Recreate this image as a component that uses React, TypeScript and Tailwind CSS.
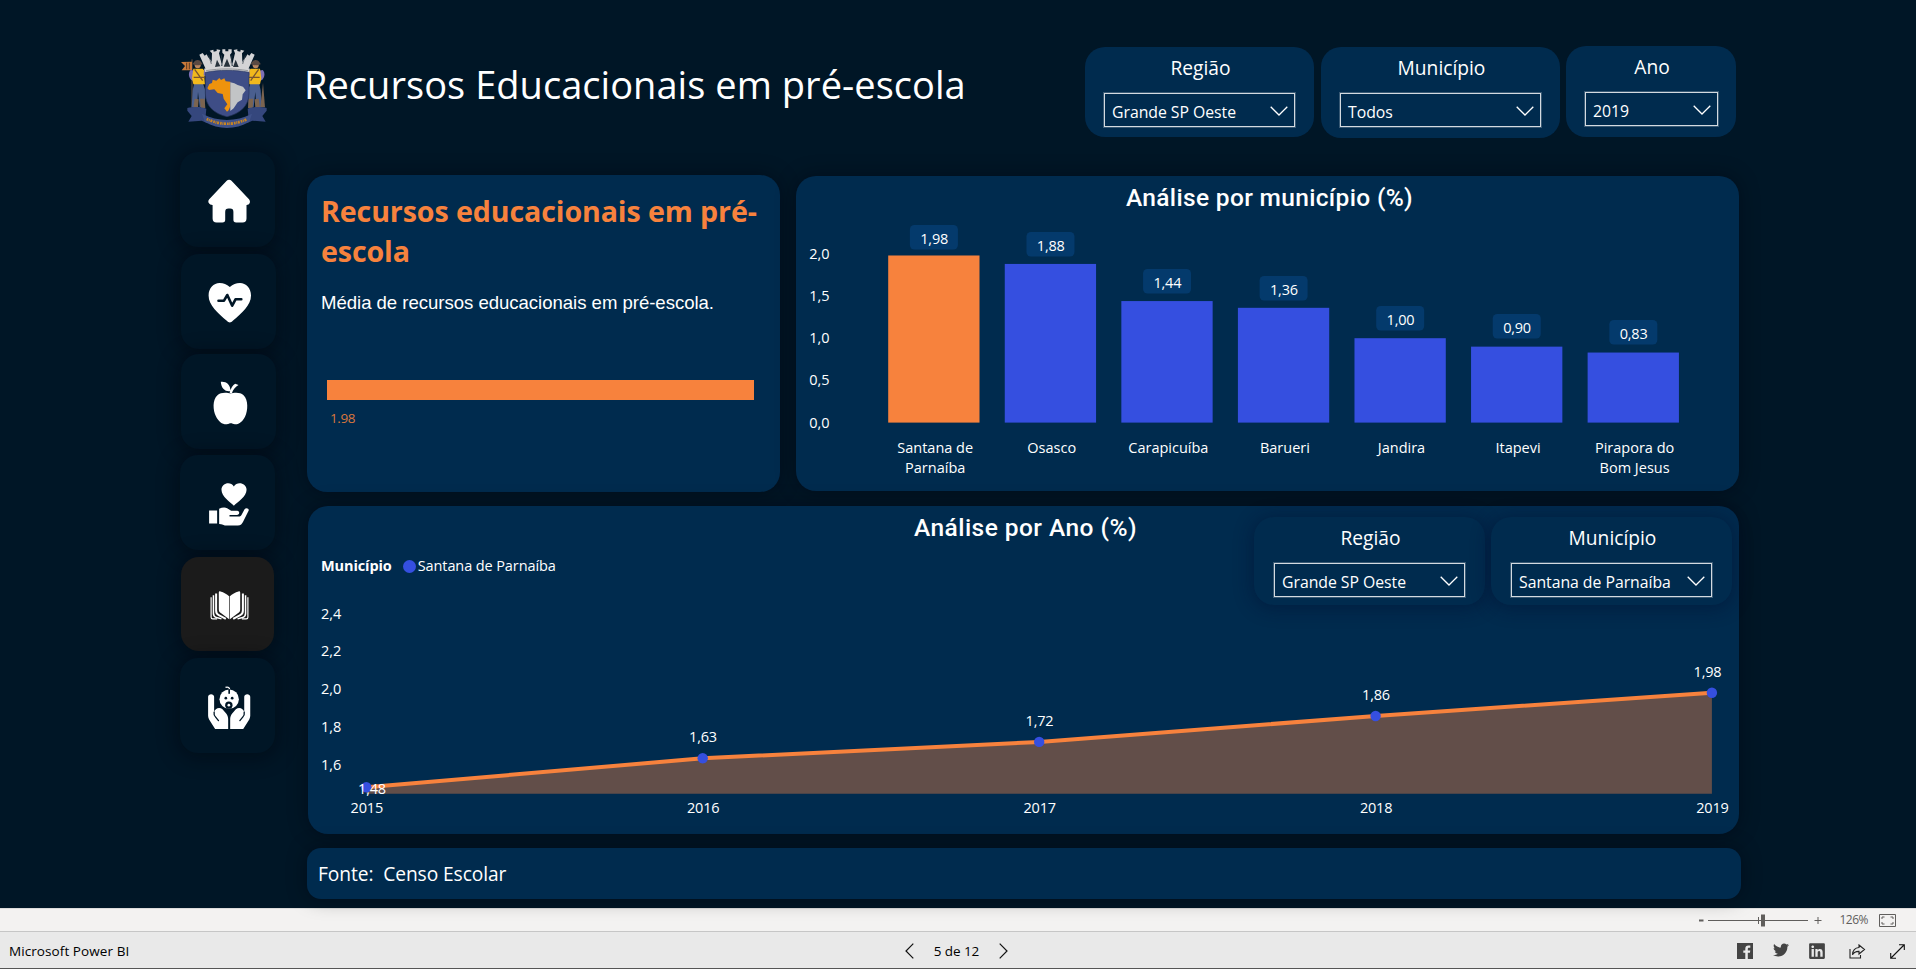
import type { ReactNode } from 'react';
import { FaLinkedin, FaTwitter } from 'react-icons/fa';

const cities = [
  { name: ['Santana de', 'Parnaíba'], value: 1.98, labelY: 225 },
  { name: ['Osasco'], value: 1.88, labelY: 232 },
  { name: ['Carapicuíba'], value: 1.44, labelY: 269 },
  { name: ['Barueri'], value: 1.36, labelY: 276 },
  { name: ['Jandira'], value: 1.0, labelY: 306 },
  { name: ['Itapevi'], value: 0.9, labelY: 314 },
  { name: ['Pirapora do', 'Bom Jesus'], value: 0.83, labelY: 320 },
];

const years = [
  { year: 2015, value: 1.48, x: 366.3, y: 787.3, lx: 372, ly: 794 },
  { year: 2016, value: 1.63, x: 702.7, y: 758.3, lx: 703, ly: 742 },
  { year: 2017, value: 1.72, x: 1039.2, y: 741.9, lx: 1039.5, ly: 726 },
  { year: 2018, value: 1.86, x: 1375.6, y: 716, lx: 1376, ly: 700 },
  { year: 2019, value: 1.98, x: 1711.9, y: 692.7, lx: 1707.5, ly: 677 },
];

const comma = (n: number, digits: number) => n.toFixed(digits).replace('.', ',');

function Chevron() {
  return (
    <svg width="18" height="10" viewBox="0 0 18 10" className="mb-[3px] shrink-0" fill="none" stroke="#fff" strokeWidth="1.3">
      <path d="M.7.8 9 9 17.3.8" />
    </svg>
  );
}

function Filter({ label, value, className, selectClass }: { label: string; value: string; className: string; selectClass: string }) {
  return (
    <div className={`flex shrink-0 flex-col rounded-[20px] bg-[#002b4e] pt-[9px] ${className}`}>
      <div className="pl-[2px] text-center text-[19.2px] leading-6">{label}</div>
      <div
        className={`mt-[13px] flex h-[34px] items-center justify-between border border-[#d3dae0] pt-1 pl-[7px] pr-[6px] shadow-[0_0_0_1px_rgba(255,255,255,0.22)] ${selectClass}`}
      >
        <span className="text-[15.8px] leading-5 tracking-[-0.03px] whitespace-nowrap">{value}</span>
        <Chevron />
      </div>
    </div>
  );
}

function Tile({ children, viewBox, className = '', active = false }: { children: ReactNode; viewBox: string; className?: string; active?: boolean }) {
  return (
    <div
      className={`shrink-0 rounded-[18px] shadow-[0_2px_20px_3px_rgba(0,5,12,0.45)] ${active ? 'h-[94px] w-[93px] bg-[#1b1b1b]' : 'h-[95px] w-[95px] bg-[#001626]'} ${className}`}
    >
      <svg viewBox={viewBox} className="h-[95px] w-[95px]" fill="#fff">
        {children}
      </svg>
    </div>
  );
}

function Guard() {
  return (
    <g>
      <path d="M50 145l-3 50h16l3-45 5 45h15l2-50-12-35H58z" fill="#4a5f8f" />
      <path d="M56 170l-4 28h14l2-26zM72 170l2 28h14l-2-28z" fill="#7b6450" />
      <path d="M44 84c-6 5-8 18 0 28l8 6 4-32z" fill="#7d6fb5" />
      <path d="M52 80h28l12 14-7 10 2 23H52l-4-18z" fill="#f2b91c" />
      <path d="M84 84l10 8-2 12-9-4z" fill="#7d6fb5" />
      <path d="M56 82l24 34M53 106h33" stroke="#7a5530" strokeWidth="4" />
      <circle cx="65" cy="70" r="9" fill="#b98762" />
      <path d="M49 66c4-2 6-12 16-12s11 9 15 12c-9 5-22 5-31 0z" fill="#5b4a42" />
    </g>
  );
}

function Crest() {
  return (
    <svg viewBox="0 0 300 270" width="100" height="90" className="-ml-1">
      <path d="M48 52v150" stroke="#6b5546" strokeWidth="3" />
      <path d="M15 60l33-1v26H17l10-13z" fill="#c8793a" />
      <path d="M32 62v20M40 62v20" stroke="#5b3a22" strokeWidth="3" />
      <Guard />
      <g transform="translate(304 0) scale(-1 1)">
        <Guard />
      </g>
      <path d="M261 122l6 74h-14z" fill="#7a6350" />
      <g fill="#d4d4d6">
        <path d="M70 38l10-5 6 8 6-4 4 8 10 12 10 30-22 5z" />
        <path d="M101 26l11-3 1 6 9-2v-5l11 2-4 10 8 32-3 16h-24l-3-20 1-28z" />
        <path d="M139 22h9v6h9v-6h10v10l-5 6 5 24v22h-28V62l6-24-6-6z" />
        <path d="M205 26l-11-3-1 6-9-2v-5l-11 2 4 10-8 32 3 16h24l3-20-1-28z" />
        <path d="M236 38l-10-5-6 8-6-4-4 8-10 12-10 30 22 5z" />
        <path d="M84 80c45-12 93-12 138 0l-5 15c-42-8-86-8-128 0z" />
      </g>
      <path d="M117 75l6-22 10 20zM171 75l8-22 9 22zM143 74l10-24 10 24z" fill="#26313b" />
      <path d="M98 40l8 26M208 40l-8 26M136 40l3 24M168 40l-3 24" stroke="#3b454e" strokeWidth="2" />
      <path d="M90 86c42-7 84-7 126 0" fill="none" stroke="#888b90" strokeWidth="2.5" />
      <path d="M88 91c42-8 88-8 131 0v63c0 38-28 62-66 70-38-8-65-32-65-70z" fill="#3e4d86" stroke="#29365f" strokeWidth="2" />
      <path
        d="M94 139l6-13 8-3 2-10 11 3 9-8 5 6 10-5 4 9 14 1v74l-5 12-5 4-8-10 9-12-11-17-3-14-15-3-10-11-16 2z"
        fill="#ee930d"
      />
      <path d="M163 121l12 3 10 5 16 5 8 11-9 12-2 16-13 8-12 18-10 8z" fill="#c2c4c6" />
      <path d="M34 198c18-4 42-5 57 2l-2 22 12 8-7 14-17-8-40 3 10-17-13-16z" fill="#35477d" />
      <path d="M272 198c-18-4-42-5-57 2l2 22-12 8 7 14 17-8 40 3-10-17 13-16z" fill="#35477d" />
      <path d="M78 215c50 25 100 25 150 0l-8 24c-42 25-92 25-134 0z" fill="#3f5289" />
      <path d="M92 231c41 19 81 19 122 0" fill="none" stroke="#c98622" strokeWidth="8" strokeDasharray="5 2 3 2 6 3" />
    </svg>
  );
}

function Sidebar() {
  return (
    <aside className="flex w-[127px] shrink-0 flex-col pt-[42px]">
      <Crest />
      <nav className="mt-[20px] flex flex-col">
        <Tile viewBox="0 0 95 95">
          <path d="M46.7 28.8a3.2 3.2 0 0 1 4.800 0L69 47.300c2 2.400.8 5.700-2.500 5.700V66.500a4 4 0 0 1-4 4h-6.300c-2 0-2.800-1-2.800-2.800V60a3.300 3.300 0 0 0-3.300-3.400h-1.600A3.300 3.300 0 0 0 45.200 60v7.700c0 1.800-.8 2.800-2.800 2.800h-5.800a4 4 0 0 1-4-4V53c-3.400 0-5.600-3.200-3.400-5.700z" />
        </Tile>
        <Tile viewBox="0 0 95 95" className="mt-[7px] ml-px">
          <path d="M48.800 68.500c-1 0-2-.8-3-1.700C37 59 27.600 51.500 27.600 41.500c0-7.500 5-12.500 11-12.500 4 0 7 1.200 10.200 4 3.200-2.800 6.200-4 10.200-4 6 0 11 5 11 12.500 0 10-9.400 17.500-18.200 25.300-1 .9-2 1.700-3 1.700z" />
          <path d="M37.500 46.700h5.500l3.300-5.700 4.900 10.700 3.300-6.400h5.800" fill="none" stroke="#001626" strokeWidth="2.600" strokeLinecap="round" strokeLinejoin="round" />
        </Tile>
        <Tile viewBox="62 42 284 284" className="mt-[5px] ml-px">
          <path d="M181 125c15-2 29 7 29 28-15 3-28-8-29-28zM207 160c4-16 10-26 17-29l10 4c-9 5-17 14-20 25z" />
          <path d="M210 161c-9-4-29-5-39 4-16 14-13 46-5 62 8 17 20 26 33 25 5-1 8-3 12-3s7 2 12 3c13 1 24-9 31-24 8-17 10-49-5-63-10-9-29-8-39-4z" />
        </Tile>
        <Tile viewBox="60 344 284 284" className="mt-[6px]">
          <path d="M221 496c-10-11-37-27-37-48 0-20 27-27 37-10 10-17 38-10 38 10 0 21-28 37-38 48z" />
          <path d="M147 510h24v39h-24zM177 505c8-4 17-5 24-2l12 8h18c8 0 8 12 0 12h-23v5h28c4 0 7-3 9-7l8-15c4-6 15-3 12 5l-16 32c-3 7-8 12-16 12h-33c-9 0-14-5-23-5z" />
        </Tile>
        <Tile viewBox="62 650 284 284" className="mt-[7px] ml-px" active>
          <path d="M175 756c0-3 2-4 5-3 10 3 19 8 26 14v69l-24-18c-5-3-7-6-7-12zM239 756c0-3-2-4-5-3-10 3-19 8-26 14v69l24-18c5-3 7-6 7-12z" />
          <g fill="none" stroke="#fff">
            <path d="M167 759v52c0 7 2 10 8 13l21 11M247 759v52c0 7-2 10-8 13l-21 11" strokeWidth="6" />
            <path d="M159 764v55c0 7 3 10 9 12l15 4M255 764v55c0 7-3 10-9 12l-15 4" strokeWidth="4.500" />
            <path d="M152 770v60c0 3 2 5 5 5h13M262 770v60c0 3-2 5-5 5h-13" strokeWidth="3.500" />
          </g>
        </Tile>
        <Tile viewBox="60 952 284 284" className="mt-[7px]">
          <circle cx="207" cy="1075" r="29" />
          <path d="M196 1040c8-3 13 1 12 8" fill="none" stroke="#fff" strokeWidth="4" />
          <path d="M207 1045v14" stroke="#001626" strokeWidth="5" />
          <g fill="#001626">
            <circle cx="197" cy="1072" r="4" />
            <circle cx="216" cy="1072" r="4" />
            <circle cx="206" cy="1093" r="11" />
          </g>
          <circle cx="206" cy="1093" r="4" />
          <path d="M144 1068c0-10 18-10 18 0v46c2-12 16-17 25-9l11 13c4 5 6 11 6 17v29h-39l-18-28c-2-4-3-7-3-11zM270 1068c0-10-18-10-18 0v46c-2-12-16-17-25-9l-11 13c-4 5-6 11-6 17v29h39l18-28c2-4 3-7 3-11z" />
          <path d="M162 1114c-1 6 0 10 4 14l9 11M252 1114c1 6 0 10-4 14l-9 11" fill="none" stroke="#001626" strokeWidth="4" strokeLinecap="round" />
        </Tile>
      </nav>
    </aside>
  );
}

function BarChart() {
  const base = 422.6;
  return (
    <svg width="943" height="276" viewBox="796 215 943 276" className="block" fill="#fff" fontSize="14.500">
      {[2, 1.5, 1, 0.5, 0].map((t) => (
        <text key={t} x="829.500" y={Math.round(427.6 - t * 84.4)} textAnchor="end">
          {comma(t, 1)}
        </text>
      ))}
      {cities.map((c, i) => {
        const x = 888.2 + i * 116.57;
        const h = c.value * 84.4;
        return (
          <g key={c.name[0]} textAnchor="middle">
            <rect x={x} y={base - h} width="91.300" height={h} fill={i === 0 ? '#f7823d' : '#354fe0'} />
            <rect x={x + 21.7} y={c.labelY} width="48" height="24.500" rx="4.500" fill="#043a6c" />
            <text x={x + 46} y={c.labelY + 19} letterSpacing="-0.2">
              {comma(c.value, 2)}
            </text>
            {c.name.map((line, n) => (
              <text key={line} x={x + 47} y={453 + n * 20}>
                {line}
              </text>
            ))}
          </g>
        );
      })}
    </svg>
  );
}

function AreaChart() {
  const line = years.map((p) => `${p.x},${p.y}`).join(' ');
  return (
    <svg width="1431" height="230" viewBox="308 604 1431 230" className="block" fill="#fff" fontSize="14.500">
      <polygon points={`366.300,793.700 ${line} 1711.900,793.700`} fill="#624e49" />
      <polyline points={line} fill="none" stroke="#f7823d" strokeWidth="4" />
      {[2.4, 2.2, 2, 1.8, 1.6].map((t, i) => (
        <text key={t} x="321" y={Math.round(618.6 + i * 37.8)}>
          {comma(t, 1)}
        </text>
      ))}
      {years.map((p) => (
        <g key={p.year} textAnchor="middle">
          <circle cx={p.x} cy={p.y} r="5.200" fill="#354fe0" />
          <text x={p.lx} y={p.ly} letterSpacing="-0.2">
            {comma(p.value, 2)}
          </text>
          <text x={p.x + 0.5} y="812.500" letterSpacing="-0.2">
            {p.year}
          </text>
        </g>
      ))}
    </svg>
  );
}

function StatusBars() {
  return (
    <footer>
      <div className="flex h-[24px] items-center justify-end border-t border-[#dcdcdc] border-b border-b-[#c6c6c6] bg-[#f3f2f1] pr-5 text-[#605e5c]">
        <svg width="124" height="16" viewBox="0 0 124 16" className="mr-[17px]" stroke="#605e5c" fill="none">
          <path d="M1 8.500h4.500" strokeWidth="2" />
          <path d="M10 8.500h100M60.500 5v7M116.500 8.500h7M120 5v7" />
          <path d="M65 2.500v12" strokeWidth="4" />
        </svg>
        <span className="mr-[11px] text-[12px] tracking-[-0.5px]">126%</span>
        <svg width="17" height="13" viewBox="0 0 17 13" fill="none" stroke="#605e5c">
          <path d="M.5.500h16v12H.5zM3 5V3h2.500M11.500 3H14v2M14 8v2h-2.500M5.500 10H3V8" />
        </svg>
      </div>
      <div className="grid h-[37px] grid-cols-[1fr_auto_1fr] items-center border-b border-[#555] bg-[#e9e9e9] pt-px text-[13.500px] text-black">
        <span className="pt-px pl-[9px] tracking-[0.08px]">Microsoft Power BI</span>
        <div className="flex items-center pr-[3px]">
          <svg width="9" height="16" viewBox="0 0 9 16" fill="none" stroke="#111" strokeWidth="1.200">
            <path d="M8.300.600 1 8l7.300 7.400" />
          </svg>
          <span className="w-[85px] pt-px text-center font-medium tracking-[-0.1px]">5 de 12</span>
          <svg width="9" height="16" viewBox="0 0 9 16" fill="none" stroke="#111" strokeWidth="1.200">
            <path d="M.7.600 8 8 .7 15.400" />
          </svg>
        </div>
        <div className="flex items-center justify-end pt-px pr-[11px] text-[#444]">
          <svg width="16" height="16" viewBox="0 0 16 16" className="mr-[20px]">
            <path d="M0 0h16v16H0z" fill="#444" />
            <path d="M8.300 16V9.800H6.300V7.400h2V5.700c0-2 1.200-3.200 3.100-3.200h1.900v2.300h-1.300c-.9 0-1.200.4-1.200 1.200v1.400h2.500l-.4 2.400h-2.100V16z" fill="#e9e9e9" />
          </svg>
          <FaTwitter size={16} className="mr-[20px] -mt-[2px]" />
          <FaLinkedin size={18} className="mr-[23px] -ml-px" />
          <svg width="17" height="15" viewBox="0 0 17 15" className="mr-[24px]" fill="none" stroke="#222" strokeWidth="1.100">
            <path d="M1 5v9h10.500v-3M10 1l5.500 4.500L10 10V7.400C7 7.300 5 8 3.500 10.800 3.700 6.500 6 3.800 10 3.500z" />
          </svg>
          <svg width="15" height="15" viewBox="0 0 15 15" fill="none" stroke="#111" strokeWidth="1.100">
            <path d="M1 14 14 1M9 .7h5.300V6M.7 9v5.300H6" />
          </svg>
        </div>
      </div>
    </footer>
  );
}

export default function App() {
  return (
    <div className="h-[969px] w-[1916px] overflow-hidden bg-[#001626] font-['Open_Sans','Noto_Sans',sans-serif] text-white">
      <div className="flex h-[908px] bg-[#001626] pl-[180px]">
        <Sidebar />
        <main className="flex w-[1434px] shrink-0 flex-col">
          <header className="flex h-[175px] items-start">
            <h1 className="-ml-[3px] w-[781px] pt-[59px] text-[38px] leading-[50px] tracking-[0.04px] whitespace-nowrap">
              Recursos Educacionais em pré-escola
            </h1>
            <Filter label="Região" value="Grande SP Oeste" className="mt-[47px] h-[90px] w-[229px]" selectClass="ml-[19px] w-[191px]" />
            <Filter label="Município" value="Todos" className="mt-[47px] ml-[7px] h-[91px] w-[239px]" selectClass="ml-[19px] w-[201px]" />
            <Filter label="Ano" value="2019" className="mt-[46px] ml-[6px] h-[91px] w-[170px]" selectClass="ml-[19px] w-[133px]" />
          </header>

          <div className="flex items-start gap-4">
            <section className="h-[317px] w-[473px] rounded-[20px] bg-[#002b4e] px-[14px] pt-[16px] shadow-[0_0_20px_rgba(0,5,12,0.4)]">
              <h2 className="text-[28.600px] leading-10 font-bold tracking-[-0.1px] whitespace-nowrap text-[#f7823d]">
                Recursos educacionais em pré-
                <br />
                escola
              </h2>
              <p className="mt-[20px] font-['Liberation_Sans',Arial,sans-serif] text-[18.600px] leading-6 tracking-[-0.04px] whitespace-nowrap">
                Média de recursos educacionais em pré-escola.
              </p>
              <div className="mt-[65px] ml-[5.500px] h-[19.500px] w-[427.500px] bg-[#f7823d]" />
              <div className="mt-[8px] ml-[9px] text-[13.500px] leading-5 tracking-[-0.400px] text-[#d9763d]">1.98</div>
            </section>
            <section className="mt-px h-[315px] w-[943px] rounded-[20px] bg-[#002b4e] shadow-[0_0_20px_rgba(0,5,12,0.4)]">
              <h2 className="h-[39px] pt-[7px] pl-[4px] text-center font-[Roboto,sans-serif] text-[24.500px] leading-[30px] font-medium tracking-[0.330px]">
                Análise por município (%)
              </h2>
              <BarChart />
            </section>
          </div>

          <section className="mt-[14px] ml-px h-[328px] w-[1431px] rounded-[20px] bg-[#002b4e] shadow-[0_0_20px_rgba(0,5,12,0.4)]">
            <div className="flex h-[98px]">
              <div className="flex w-[606px] items-center pt-[22px] pl-[13px] text-[14.500px] leading-5">
                <span className="font-bold tracking-[-0.1px]">Município</span>
                <span className="ml-[11px] h-[13px] w-[13px] rounded-full bg-[#354fe0]" />
                <span className="ml-[2px] tracking-[-0.100px]">Santana de Parnaíba</span>
              </div>
              <h2 className="w-[340px] pt-[7px] font-[Roboto,sans-serif] text-[24.500px] leading-[30px] font-medium tracking-[0.450px] whitespace-nowrap">
                Análise por Ano (%)
              </h2>
              <Filter
                label="Região"
                value="Grande SP Oeste"
                className="mt-[11px] h-[88px] w-[231px] shadow-[0_2px_18px_2px_rgba(0,16,48,0.45)]"
                selectClass="ml-[20px] w-[191px]"
              />
              <Filter
                label="Município"
                value="Santana de Parnaíba"
                className="mt-[11px] ml-[6px] h-[88px] w-[241px] shadow-[0_2px_18px_2px_rgba(0,16,48,0.45)]"
                selectClass="ml-[20px] w-[201px]"
              />
            </div>
            <AreaChart />
          </section>

          <section className="mt-[14px] flex h-[51px] w-[1434px] items-center rounded-[14px] bg-[#002b4e] pt-[2px] pl-[11px] text-[19.200px] tracking-[-0.080px] whitespace-pre shadow-[0_0_20px_rgba(0,5,12,0.4)]">
            {'Fonte:  Censo Escolar'}
          </section>
        </main>
      </div>
      <StatusBars />
    </div>
  );
}
